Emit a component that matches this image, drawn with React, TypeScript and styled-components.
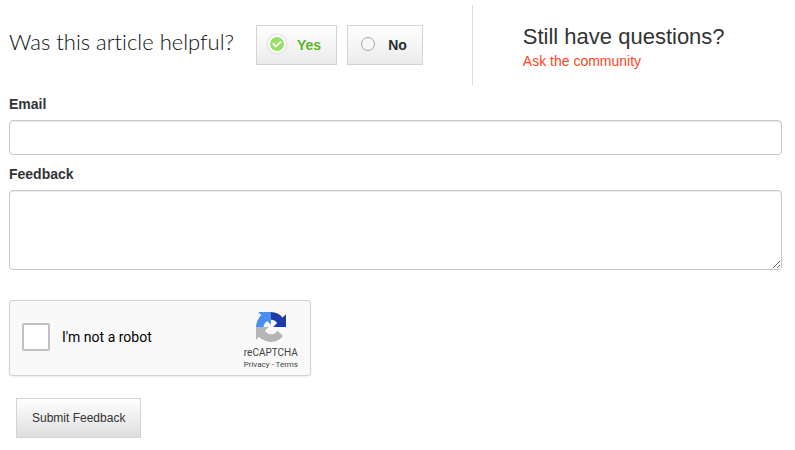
import React, { useState } from "react";
import styled, { createGlobalStyle } from "styled-components";

const GlobalStyle = createGlobalStyle`
  *, *::before, *::after { box-sizing: border-box; }
  body {
    margin: 0;
    background: #fff;
    color: #333;
    font: 14px/20px "Liberation Sans", Arial, sans-serif;
  }
`;

const Page = styled.main`
  padding: 5px 13px 12px 9px;
`;

const Intro = styled.header`
  display: grid;
  grid-template-columns: 3fr 2fr;
  min-height: 80px;
`;

const Helpful = styled.div`
  display: flex;
  align-items: center;
  gap: 22px;
  border-right: 1px solid #ddd;
`;

const Question = styled.h2`
  margin: 0 0 6px;
  font: 300 22px/30px Lato, sans-serif;
  font-variant-ligatures: none;
  color: #111;
  white-space: nowrap;
`;

const Choices = styled.div`
  display: flex;
  gap: 10px;
`;

const Choice = styled.label<{ $active: boolean }>`
  display: flex;
  align-items: center;
  gap: 10px;
  height: 40px;
  padding: 0 15px 0 10px;
  border: 1px solid #d4d4d4;
  background: linear-gradient(#fff, #ebebeb);
  color: ${(p) => (p.$active ? "#5cb52a" : "#2b2b33")};
  font-weight: bold;
  cursor: pointer;
`;

const Mark = styled.span`
  display: grid;
  place-items: center;
  width: 20px;
  height: 20px;
  margin-bottom: 2px;

  > * {
    grid-area: 1 / 1;
  }

  svg {
    pointer-events: none;
  }
`;

const Radio = styled.input`
  appearance: none;
  width: 14px;
  height: 14px;
  margin: 0;
  border: 1px solid #a3a3ab;
  border-radius: 50%;
  background: #f8f8f8;
  cursor: pointer;

  &:checked {
    width: 18px;
    height: 18px;
    border: 2px solid #fff;
    background: #96e065;
    box-shadow: 0 0 2px 1px #ddd;
  }
`;

const Community = styled.div`
  padding: 17px 0 0 50px;
`;

const CommunityTitle = styled.h2`
  margin: 0;
  font-size: 22px;
  font-weight: 300;
  line-height: 30px;
  white-space: nowrap;
`;

const CommunityLink = styled.a`
  display: block;
  line-height: 18px;
  color: #ff4425;
  text-decoration: none;
`;

const Form = styled.form`
  display: flex;
  flex-direction: column;
  align-items: flex-start;
  padding-top: 9px;
`;

const FieldLabel = styled.label`
  margin-bottom: 6px;
  font-weight: bold;
`;

const TextBox = styled.input`
  width: 100%;
  height: 35px;
  margin-bottom: 9px;
  padding: 6px 10px;
  border: 1px solid #c8c8c8;
  border-radius: 4px;
  box-shadow: inset 0 1px 1px #ececec;
  background: #fff;
  font: inherit;
`;

const TextArea = styled.textarea`
  width: 100%;
  height: 80px;
  margin-bottom: 30px;
  padding: 6px 10px;
  border: 1px solid #c8c8c8;
  border-radius: 4px;
  box-shadow: inset 0 1px 1px #ececec;
  background: #fff;
  font: inherit;
  resize: vertical;
`;

const Captcha = styled.div`
  display: flex;
  justify-content: space-between;
  width: 302px;
  height: 76px;
  padding: 0 12px;
  border: 1px solid #d3d3d3;
  border-radius: 3px;
  background: #f9f9f9;
  box-shadow: 0 1px 2px rgba(0, 0, 0, 0.08);
  font-family: Roboto, sans-serif;
`;

const RobotLabel = styled.label`
  display: flex;
  align-items: center;
  gap: 12px;
  padding-bottom: 2px;
  color: #000;
`;

const RobotCheck = styled.input`
  appearance: none;
  width: 28px;
  height: 28px;
  margin: 0;
  border: 2px solid #c1c1c1;
  border-radius: 2px;
  background: #fff;

  &:checked {
    background: #4caf50;
  }
`;

const Brand = styled.div`
  display: flex;
  flex-direction: column;
  align-items: center;
  padding-top: 11px;
  color: #444;
`;

const BrandName = styled.span`
  margin-top: 4px;
  font-size: 10px;
  line-height: 14px;
`;

const Legal = styled.span`
  font-size: 8px;
  line-height: 10px;

  a {
    color: inherit;
    text-decoration: none;
  }
`;

const Submit = styled.button`
  height: 40px;
  margin: 22px 0 0 7px;
  padding: 0 15px;
  border: 1px solid #d4d4d4;
  background: linear-gradient(#fff, #dedede);
  color: #333;
  font: 12px/20px "Liberation Sans", Arial, sans-serif;
  cursor: pointer;
`;

const CheckIcon = () => (
  <svg width="14" height="14" viewBox="0 0 14 14" fill="none" aria-hidden="true">
    <path d="M3.4 7l2.5 2.5 4.7-4.6" stroke="#fff" strokeWidth="1.8" strokeLinecap="round" />
  </svg>
);

const RecaptchaLogo = () => (
  <svg width="30" height="30" viewBox="0 0 64 64" aria-hidden="true">
    <path fill="#1c3aa9" d="M64 31.955l-.033-1.37V4.687l-7.16 7.16C50.948 4.674 42.033.093 32.05.093c-10.4 0-19.622 4.96-25.458 12.64l11.736 11.86a15.55 15.55 0 0 1 4.754-5.334c2.05-1.6 4.952-2.906 8.968-2.906.485 0 .86.057 1.135.163 4.976.393 9.288 3.14 11.828 7.124l-8.307 8.307L64 31.953" />
    <path fill="#4a8ff0" d="M31.862.094l-1.37.033H4.594l7.16 7.16C4.58 13.147 0 22.06 0 32.046c0 10.4 4.96 19.622 12.64 25.458L24.5 45.768a15.55 15.55 0 0 1-5.334-4.754c-1.6-2.05-2.906-4.952-2.906-8.968 0-.485.057-.86.163-1.135.393-4.976 3.14-9.288 7.124-11.828l8.307 8.307L31.86.095" />
    <path fill="#b5b5b5" d="M.001 32.045l.033 1.37v25.898l7.16-7.16c5.86 7.173 14.774 11.754 24.76 11.754 10.4 0 19.622-4.96 25.458-12.64l-11.736-11.86a15.55 15.55 0 0 1-4.754 5.334c-2.05 1.6-4.952 2.906-8.968 2.906-.485 0-.86-.057-1.135-.163-4.976-.393-9.288-3.14-11.828-7.124l8.307-8.307c-10.522.04-22.4.066-27.295-.005" />
  </svg>
);

const options = ["Yes", "No"];

export default function App() {
  const [answer, setAnswer] = useState("Yes");

  return (
    <Page>
      <GlobalStyle />
      <Intro>
        <Helpful>
          <Question id="helpful">Was this article helpful?</Question>
          <Choices role="radiogroup" aria-labelledby="helpful">
            {options.map((option) => (
              <Choice key={option} $active={answer === option}>
                <Mark>
                  <Radio
                    type="radio"
                    name="helpful"
                    value={option}
                    checked={answer === option}
                    onChange={() => setAnswer(option)}
                  />
                  {answer === option && <CheckIcon />}
                </Mark>
                {option}
              </Choice>
            ))}
          </Choices>
        </Helpful>
        <Community>
          <CommunityTitle>Still have questions?</CommunityTitle>
          <CommunityLink href="#community">Ask the community</CommunityLink>
        </Community>
      </Intro>
      <Form onSubmit={(event) => event.preventDefault()}>
        <FieldLabel htmlFor="email">Email</FieldLabel>
        <TextBox id="email" type="email" />
        <FieldLabel htmlFor="feedback">Feedback</FieldLabel>
        <TextArea id="feedback" />
        <Captcha>
          <RobotLabel>
            <RobotCheck type="checkbox" />
            I'm not a robot
          </RobotLabel>
          <Brand>
            <RecaptchaLogo />
            <BrandName>reCAPTCHA</BrandName>
            <Legal>
              <a href="#privacy">Privacy</a> - <a href="#terms">Terms</a>
            </Legal>
          </Brand>
        </Captcha>
        <Submit type="submit">Submit Feedback</Submit>
      </Form>
    </Page>
  );
}
